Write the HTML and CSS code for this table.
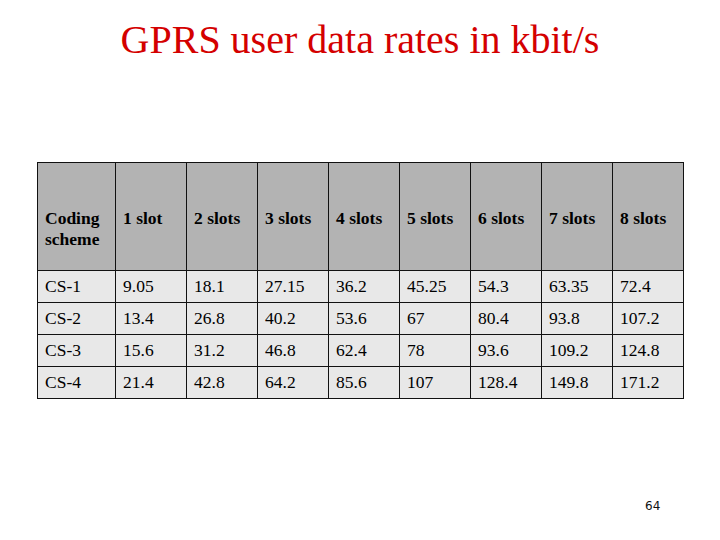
FILE: index.html
```html
<!DOCTYPE html>
<html>
<head>
<meta charset="utf-8">
<link rel="stylesheet" href="styles.css">
</head>
<body>
<div class="slide">
  <h1 class="title">GPRS user data rates in kbit/s</h1>
  <table class="rates">
    <colgroup>
      <col class="c-first"><col class="c"><col class="c"><col class="c"><col class="c"><col class="c"><col class="c"><col class="c"><col class="c">
    </colgroup>
    <tr class="head">
      <th>Coding<br>scheme</th>
      <th>1 slot</th><th>2 slots</th><th>3 slots</th><th>4 slots</th>
      <th>5 slots</th><th>6 slots</th><th>7 slots</th><th>8 slots</th>
    </tr>
    <tr><td>CS-1</td><td>9.05</td><td>18.1</td><td>27.15</td><td>36.2</td><td>45.25</td><td>54.3</td><td>63.35</td><td>72.4</td></tr>
    <tr><td>CS-2</td><td>13.4</td><td>26.8</td><td>40.2</td><td>53.6</td><td>67</td><td>80.4</td><td>93.8</td><td>107.2</td></tr>
    <tr><td>CS-3</td><td>15.6</td><td>31.2</td><td>46.8</td><td>62.4</td><td>78</td><td>93.6</td><td>109.2</td><td>124.8</td></tr>
    <tr><td>CS-4</td><td>21.4</td><td>42.8</td><td>64.2</td><td>85.6</td><td>107</td><td>128.4</td><td>149.8</td><td>171.2</td></tr>
  </table>
  <div class="pagenum">64</div>
</div>
</body>
</html>
```
FILE: styles.css
```css
html, body { margin: 0; padding: 0; background: #fff; }
.slide { width: 720px; height: 540px; position: relative; font-family: "Liberation Serif", "Times New Roman", serif; }
.title { margin: 0; padding-top: 17px; height: 162px; box-sizing: border-box; text-align: center; font-weight: normal; font-size: 40px; line-height: 46px; color: #d40000; }
.rates { margin-left: 37px; border-collapse: collapse; table-layout: fixed; width: 647px; font-size: 17.5px; }
.c-first { width: 78px; }
.c { width: 71px; }
.rates th, .rates td { border: 1px solid #111; text-align: left; padding: 0 0 0 7px; vertical-align: middle; overflow: hidden; white-space: nowrap; }
.rates th { background: #b3b3b3; font-weight: bold; height: 62px; padding-top: 45px; line-height: 21px; vertical-align: top; }
.rates td { background: #e8e8e8; height: 31px; }
.pagenum { position: absolute; left: 645px; top: 499px; font-family: "DejaVu Sans", sans-serif; font-size: 12px; color: #111; }
```
